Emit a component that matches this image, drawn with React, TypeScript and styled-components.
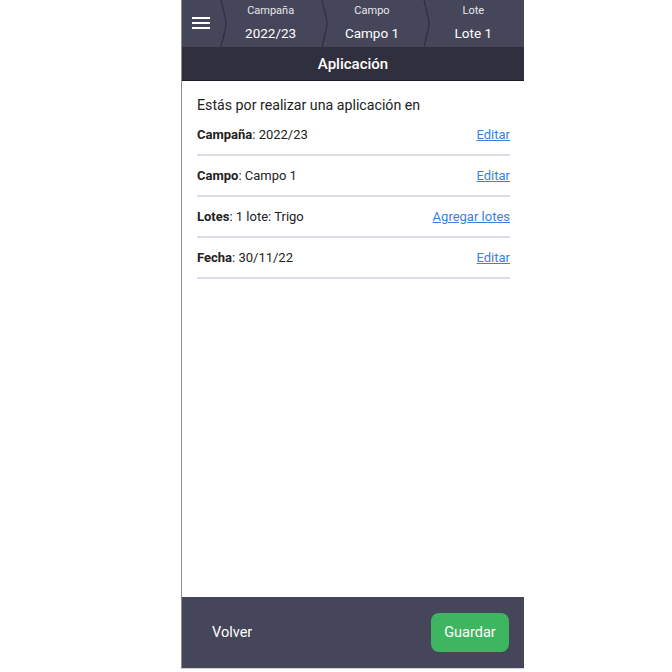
import styled, { createGlobalStyle } from 'styled-components';

const GlobalStyle = createGlobalStyle`
  body {
    margin: 0;
    background: #ffffff;
    font-family: 'Roboto', 'Liberation Sans', sans-serif;
  }
`;

const crumbs = [
  { label: 'Campaña', value: '2022/23' },
  { label: 'Campo', value: 'Campo 1' },
  { label: 'Lote', value: 'Lote 1' },
];

const rows = [
  { key: 'Campaña', value: '2022/23', action: 'Editar' },
  { key: 'Campo', value: 'Campo 1', action: 'Editar' },
  { key: 'Lotes', value: '1 lote: Trigo', action: 'Agregar lotes' },
  { key: 'Fecha', value: '30/11/22', action: 'Editar' },
];

function Chevron() {
  return (
    <StChevron width="8" height="47" viewBox="0 0 8 47">
      <path d="M1 0 C3 10 6 18 6 23.5 C6 29 3 37 1 47" fill="none" stroke="#2e2e3e" strokeWidth="1.2" />
    </StChevron>
  );
}

export default function App() {
  return (
    <>
      <GlobalStyle />
      <StPhone>
        <StTopBar>
          <StMenu>
            <span />
            <span />
            <span />
          </StMenu>
          {crumbs.map((c) => (
            <StCrumb key={c.label}>
              <Chevron />
              <StCrumbLabel>{c.label}</StCrumbLabel>
              <StCrumbValue>{c.value}</StCrumbValue>
            </StCrumb>
          ))}
        </StTopBar>
        <StTitleBar>Aplicación</StTitleBar>
        <StContent>
          <StIntro>Estás por realizar una aplicación en</StIntro>
          {rows.map((r) => (
            <StRow key={r.key}>
              <span>
                <b>{r.key}</b>: {r.value}
              </span>
              <StLink href="#">{r.action}</StLink>
            </StRow>
          ))}
        </StContent>
        <StBottomBar>
          <StBackBtn>Volver</StBackBtn>
          <StSaveBtn>Guardar</StSaveBtn>
        </StBottomBar>
      </StPhone>
    </>
  );
}

const StPhone = styled.div`
  width: 342px;
  height: 668px;
  margin-left: 181px;
  border-left: 1px solid #8e8e8e;
  border-bottom: 1px solid #d4d4d4;
  display: flex;
  flex-direction: column;
  background: #ffffff;
`;

const StTopBar = styled.div`
  height: 47px;
  background: #46465a;
  display: flex;
  color: #ffffff;
`;

const StMenu = styled.div`
  width: 38px;
  display: flex;
  flex-direction: column;
  justify-content: center;
  align-items: center;
  gap: 3px;
  padding-bottom: 2px;
  box-sizing: border-box;

  & > span {
    width: 18px;
    height: 2px;
    background: #ffffff;
  }
`;

const StCrumb = styled.div`
  flex: 1;
  position: relative;
  display: flex;
  flex-direction: column;
  align-items: center;
  padding-top: 4px;
  box-sizing: border-box;
`;

const StChevron = styled.svg`
  position: absolute;
  left: 0;
  top: 0;
`;

const StCrumbLabel = styled.div`
  font-size: 11px;
  line-height: 14px;
  color: #e6e6ee;
`;

const StCrumbValue = styled.div`
  font-size: 13.5px;
  line-height: 18px;
  margin-top: 6px;
`;

const StTitleBar = styled.div`
  height: 33px;
  background: #2f2f3d;
  border-bottom: 1px solid #1c1c28;
  color: #ffffff;
  font-size: 15px;
  font-weight: 500;
  display: flex;
  justify-content: center;
  align-items: center;
`;

const StContent = styled.div`
  flex: 1;
  padding: 15px 14px 0 15px;
`;

const StIntro = styled.div`
  font-size: 14.2px;
  line-height: 18px;
  color: #222222;
  margin-bottom: 1px;
`;

const StRow = styled.div`
  height: 39px;
  display: flex;
  justify-content: space-between;
  align-items: center;
  border-bottom: 2px solid #dcdce6;
  font-size: 13px;
  color: #222222;

  & b {
    font-weight: 700;
  }
`;

const StLink = styled.a`
  color: #3a7fe3;
  text-decoration: underline;
`;

const StBottomBar = styled.div`
  height: 71px;
  background: #46465a;
  display: flex;
  justify-content: space-between;
  align-items: center;
  padding: 0 15px 0 30px;
`;

const StBackBtn = styled.button`
  background: none;
  border: none;
  padding: 0;
  color: #ffffff;
  font-family: inherit;
  font-size: 14.5px;
`;

const StSaveBtn = styled.button`
  width: 78px;
  height: 39px;
  background: #3eb660;
  border: none;
  border-radius: 8px;
  color: #ffffff;
  font-family: inherit;
  font-size: 14.5px;
`;
